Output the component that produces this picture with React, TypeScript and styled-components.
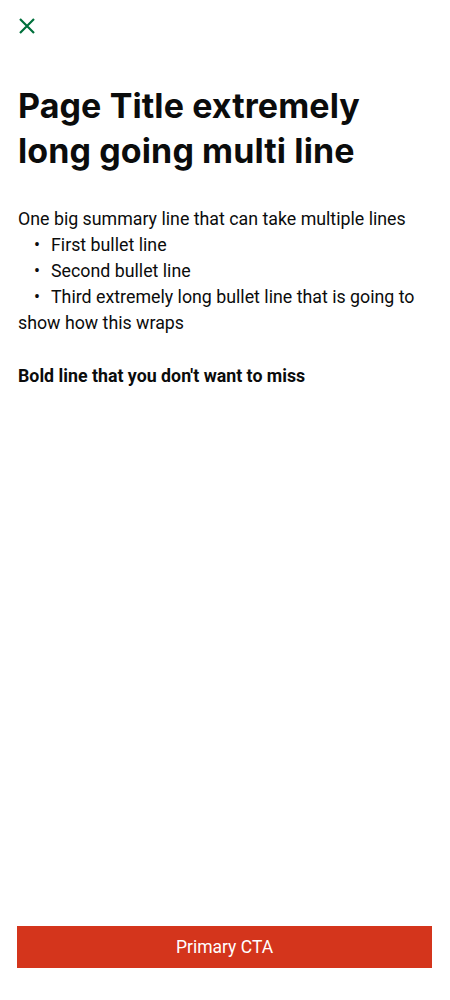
import React from "react";
import styled, { createGlobalStyle } from "styled-components";

const Global = createGlobalStyle`
  html, body { margin: 0; padding: 0; background: #fff; }
  body { font-family: Roboto, "Noto Sans", sans-serif; color: #0b0c0c; }
  #root { min-height: 1000px; }
`;

const Screen = styled.div`
  box-sizing: border-box;
  width: 450px;
  height: 1000px;
  display: flex;
  flex-direction: column;
  padding: 0 18px 32px 17px;
`;

const CloseButton = styled.button`
  align-self: flex-start;
  background: none;
  border: 0;
  padding: 0;
  margin: 18px 0 0 2px;
  width: 16px;
  height: 16px;
  display: flex;
  cursor: pointer;
`;

const Title = styled.h1`
  margin: 49px 0 0 1px;
  max-width: 405px;
  font-family: Inter, sans-serif;
  font-weight: 700;
  font-size: 34px;
  line-height: 45px;
  letter-spacing: 0.1px;
  color: #0b0c0c;
`;

const Body = styled.div`
  margin: 33px 0 0 1px;
  font-family: Roboto, sans-serif;
  font-size: 17.8px;
  line-height: 26px;
  color: #0b0c0c;
`;

const Para = styled.p`
  margin: 0;
`;

const Bullets = styled.ul`
  margin: 0;
  padding: 0;
  list-style: none;
`;

const Bullet = styled.li`
  text-indent: 16px;
  &::before {
    content: "•";
    display: inline-block;
    text-indent: 0;
    width: 17px;
  }
`;

const Strong = styled.p`
  margin: 27px 0 0;
  font-weight: 700;
`;

const Spacer = styled.div`
  flex: 1;
`;

const Primary = styled.button`
  width: 415px;
  height: 42px;
  border: 0;
  border-radius: 0;
  background: #d4351c;
  color: #fff;
  font-family: Roboto, sans-serif;
  font-size: 17.5px;
  cursor: pointer;
`;

export default function App() {
  return (
    <>
      <Global />
      <Screen>
        <CloseButton aria-label="Close">
          <svg width="16" height="16" viewBox="0 0 16 16">
            <path d="M1 1 L15 15 M15 1 L1 15" stroke="#00703c" strokeWidth="2.2" fill="none" />
          </svg>
        </CloseButton>
        <Title>Page Title extremely long going multi line</Title>
        <Body>
          <Para>One big summary line that can take multiple lines</Para>
          <Bullets>
            <Bullet>First bullet line</Bullet>
            <Bullet>Second bullet line</Bullet>
            <Bullet>Third extremely long bullet line that is going to show how this wraps</Bullet>
          </Bullets>
          <Strong>Bold line that you don't want to miss</Strong>
        </Body>
        <Spacer />
        <Primary>Primary CTA</Primary>
      </Screen>
    </>
  );
}
